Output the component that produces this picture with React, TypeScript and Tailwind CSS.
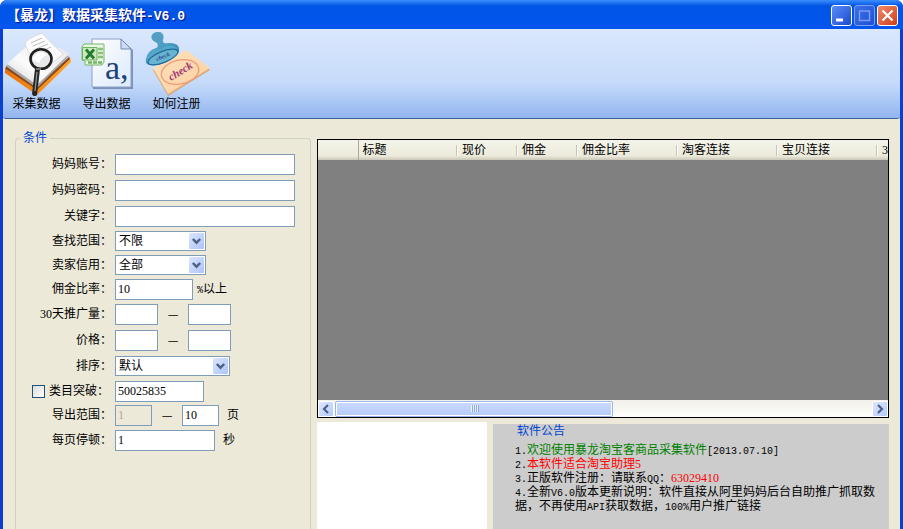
import type { ReactNode } from "react";

const FIELD =
  "h-[21px] border border-[#7f9db9] bg-white px-[2px] font-['Liberation_Serif','Noto_Sans_CJK_SC',serif] text-[12px] leading-none text-black outline-none disabled:bg-[#ece9d8] disabled:text-[#aca899]";

function Row({ id, label, compact, check, children }: { id: string; label: ReactNode; compact?: boolean; check?: ReactNode; children: ReactNode }) {
  return (
    <div className={`flex items-center ${compact ? "h-6" : "h-[26px]"}`}>
      <div className={`mr-[3px] flex w-24 items-center justify-end gap-1 ${check ? "pr-[3px]" : ""}`}>
        {check}
        <label htmlFor={id} className="whitespace-nowrap">{label}</label>
      </div>
      {children}
    </div>
  );
}

function Dash() {
  return <span className="w-[30px] text-center font-['Noto_Sans_CJK_SC',sans-serif]">—</span>;
}

function Dropdown({ id, options, wide }: { id: string; options: string[]; wide?: boolean }) {
  return (
    <div className={`relative ${wide ? "w-[115px]" : "w-[91px]"}`}>
      <select id={id} className="block h-5 w-full appearance-none border border-[#7f9db9] bg-white px-[3px] text-[12px] leading-[18px] outline-none">
        {options.map((o) => (
          <option key={o}>{o}</option>
        ))}
      </select>
      <svg className="pointer-events-none absolute top-[2px] right-[2px]" width="15" height="16" viewBox="0 0 15 16">
        <defs>
          <linearGradient id={`${id}-g`} x1="0" y1="0" x2="1" y2="1">
            <stop offset="0" stopColor="#dbe6fe" />
            <stop offset="1" stopColor="#adc4f8" />
          </linearGradient>
        </defs>
        <rect width="15" height="16" rx="1" fill={`url(#${id}-g)`} />
        <path d="M3.8 6 7.5 9.7 11.2 6" fill="none" stroke="#4d6185" strokeWidth="2.4" />
      </svg>
    </div>
  );
}

function CollectIcon() {
  return (
    <svg width="70" height="64" viewBox="3 32 70 64" aria-hidden="true">
      <defs>
        <linearGradient id="page" x1="0" y1="1" x2="1" y2="0">
          <stop offset="0" stopColor="#cfcfcf" />
          <stop offset="0.4" stopColor="#fbfbfb" />
          <stop offset="1" stopColor="#e6e6e6" />
        </linearGradient>
        <linearGradient id="cover" x1="0" y1="0" x2="1" y2="0">
          <stop offset="0" stopColor="#e8730a" />
          <stop offset="0.5" stopColor="#f58a12" />
          <stop offset="1" stopColor="#ffa528" />
        </linearGradient>
      </defs>
      <path d="M5 67 36 88 70 57 71 62 37 95 5 73Z" fill="url(#cover)" />
      <path d="M6 66 36 87 69 57 70 59 37 90 6 69Z" fill="#8a4a20" />
      <path d="M6 66 28 45 69 56 37 88Z" fill="#a8a8a8" />
      <path d="M7 64 29 44 60 48 69 54 37 85Z" fill="url(#page)" />
      <path d="M25 44Q26 39 42 33Q50 42 63 54L44 70Q30 58 25 44Z" fill="#fcfcfc" stroke="#d0d0d0" strokeWidth=".7" />
      <path d="m31 43 11-5M33 46l12-5M36 49l12-5M40 52l11-5" stroke="#bcbcbc" strokeWidth="1" />
      <path d="m35 69-3 25q2 4 5 1l3-26Z" fill="#262626" />
      <path d="m37 72-2 19" stroke="#9a9a9a" strokeWidth="1.2" />
      <ellipse cx="41" cy="59" rx="10.5" ry="9.800" fill="#e3e6e8" fillOpacity=".9" stroke="#202020" strokeWidth="2.600" />
      <path d="M33 60q1-8 9-8l6 3q-5 0-9 8Z" fill="#fff" />
      <path d="M36 69h5" stroke="#8c8c8c" strokeWidth="1.500" />
    </svg>
  );
}

function ExportIcon() {
  return (
    <svg width="70" height="64" viewBox="73 32 70 64" aria-hidden="true">
      <defs>
        <linearGradient id="sheet" x1="0" y1="0" x2="1" y2="1">
          <stop offset="0" stopColor="#fff" />
          <stop offset="1" stopColor="#dce9fb" />
        </linearGradient>
      </defs>
      <path d="M93 40H122L133 50V89H93Z" fill="#7b92b5" />
      <path d="M92 39H121L131 49V87H92Z" fill="url(#sheet)" stroke="#8aa2c8" />
      <path d="M121 39V49H131Z" fill="#cbdcf5" stroke="#7189b0" />
      <text x="105" y="79" fontFamily="'Liberation Serif', serif" fontSize="34" fill="#1d4479">a,</text>
      <path d="M84 44h20v18l-2 3H85V61l-3-1V47Z" fill="#e9f6e3" stroke="#7ab56b" />
      <path d="M98 49h5M98 53h5M98 57h5" stroke="#8cc27c" strokeWidth="2.500" />
      <path d="M88 62.500h14" stroke="#76b367" strokeWidth="2.500" strokeDasharray="4 1" />
      <path d="M82.500 47.500H97V60H82.500Z" fill="#cbe8c1" stroke="#6fb25f" />
      <path d="M86 49.500 94 58.500M94 49.500 86 58.500" stroke="#237b2b" strokeWidth="2.800" />
    </svg>
  );
}

function RegisterIcon() {
  return (
    <svg width="70" height="64" viewBox="143 32 70 64" aria-hidden="true">
      <defs>
        <linearGradient id="note" x1="0" y1="0" x2="1" y2="1">
          <stop offset="0" stopColor="#ffe2bd" />
          <stop offset="1" stopColor="#fbcf9f" />
        </linearGradient>
        <linearGradient id="stamp" x1="0" y1="0" x2="1" y2="1">
          <stop offset="0" stopColor="#5eb0d2" />
          <stop offset="1" stopColor="#3787b3" />
        </linearGradient>
      </defs>
      <path d="M153 70 186 52 210 70 168 96Z" fill="#dba976" />
      <path d="M153 68 186 50 210 68 168 94Z" fill="url(#note)" />
      <ellipse cx="180" cy="72" rx="19" ry="12" fill="none" stroke="#ee9a7c" strokeWidth="1.300" transform="rotate(-12 180 72)" />
      <text x="171" y="81" transform="rotate(-31 171 81)" fontFamily="'Liberation Serif', serif" fontSize="11" fontStyle="italic" fontWeight="bold" fill="#a03878">check</text>
      <path d="M146 59q1-8 10-11 3-1 1-5-7-3-5-8 3-4 8-3 5 2 3 8-1 4 6 3 9 0 10 5v4q-5 7-15 11-11 4-17 1-2-2-1-5Z" fill="url(#stamp)" />
      <ellipse cx="157" cy="37" rx="5.500" ry="4.500" fill="#539ec2" />
      <path d="M147 58q2-7 11-9 3 2 7-3 7-1 12 2-2 5-13 10-11 4-17 0Z" fill="#55a6c9" />
      <ellipse cx="163" cy="57" rx="16" ry="5.500" transform="rotate(-22 163 57)" fill="#67b5d2" stroke="#1f6c98" strokeWidth="1.200" />
      <text x="157" y="61" transform="rotate(-22 157 61)" fontFamily="'Liberation Serif', serif" fontSize="6" fontStyle="italic" fontWeight="bold" fill="#2b4b91">check</text>
    </svg>
  );
}

function ToolButton({ icon, label }: { icon: ReactNode; label: string }) {
  return (
    <button className="flex w-[70px] flex-col items-center">
      {icon}
      <span className="pt-px pr-[3px] text-[12px] leading-[14px]">{label}</span>
    </button>
  );
}

function CaptionButton({ label, tone, children }: { label: string; tone: string; children: ReactNode }) {
  return (
    <button aria-label={label} className={`flex size-[21px] items-center justify-center rounded-[3px] border ${tone}`}>
      <svg width="19" height="19" viewBox="0 0 19 19" fill="none" stroke="currentColor">
        {children}
      </svg>
    </button>
  );
}

function ScrollButton({ label, d }: { label: string; d: string }) {
  return (
    <button aria-label={label} className="flex h-4 w-[16px] shrink-0 items-center justify-center rounded-[2px] border border-white bg-linear-to-br from-[#dce6fe] to-[#b5cafa]">
      <svg width="10" height="10" viewBox="0 0 10 10" fill="none" stroke="#4d6185" strokeWidth="2.200">
        <path d={d} />
      </svg>
    </button>
  );
}

const COLUMNS = [
  { name: "标题", width: "w-[100px]" },
  { name: "现价", width: "w-[60px]" },
  { name: "佣金", width: "w-[60px]" },
  { name: "佣金比率", width: "w-[100px]" },
  { name: "淘客连接", width: "w-[100px]" },
  { name: "宝贝连接", width: "w-[100px]" },
  { name: "3", width: "w-[100px]" },
];

function ResultGrid() {
  return (
    <section className="flex h-[279px] shrink-0 flex-col border border-black bg-[#808080]">
      <div className="flex-1 overflow-hidden">
        <table className="w-[660px] table-fixed border-collapse">
          <thead>
            <tr className="h-5 bg-linear-to-b from-[#f5f4ea] via-[#ebeadb] via-80% to-[#cbc7b8]">
              <th className="w-10 border-r border-[#aca899] p-0" />
              {COLUMNS.map((c) => (
                <th key={c.name} className={`p-0 text-left leading-4 font-normal ${c.width}`}>
                  <div className="flex items-center justify-between">
                    <span className="pl-1">{c.name}</span>
                    <span className="h-[11px] w-[2px] border-r border-l border-r-white border-l-[#c7c5b2]" />
                  </div>
                </th>
              ))}
            </tr>
          </thead>
        </table>
      </div>
      <div className="flex h-[17px] items-center bg-linear-to-b from-[#f1f0e9] to-[#fefefb]">
        <ScrollButton label="向左滚动" d="M7 1 3 5l4 4" />
        <div className="flex flex-1 px-px">
          <div className="flex h-4 w-[278px] items-center justify-center gap-px rounded-[2px] border border-[#9ab5ee] bg-linear-to-b from-[#cbdafd] to-[#b5cbfb] ring-1 ring-white ring-inset">
            {[0, 1, 2, 3].map((n) => (
              <span key={n} className="h-[7px] w-px bg-[#eef4fe] shadow-[1px_0_0_#8fa8e6]" />
            ))}
          </div>
        </div>
        <ScrollButton label="向右滚动" d="m3 1 4 4-4 4" />
      </div>
    </section>
  );
}

function Mono({ children }: { children: ReactNode }) {
  return <span className="font-['Liberation_Mono',monospace] text-[10px] leading-none">{children}</span>;
}

function Notice() {
  return (
    <section className="mt-[2px] flex-1 bg-[#cccccc] pr-3 pl-[22px]">
      <h2 className="pl-[2px] leading-[14px] text-[#0046d5]">软件公告</h2>
      <div className="pt-[5px] leading-[14px]">
        <p><Mono>1.</Mono><span className="text-[#008000]">欢迎使用暴龙淘宝客商品采集软件</span><Mono>[2013.07.10]</Mono></p>
        <p><Mono>2.</Mono><span className="text-[#ff0000]">本软件适合淘宝助理5</span></p>
        <p><Mono>3.</Mono>正版软件注册：请联系<Mono>QQ</Mono>：<span className="text-[#ff0000]">63029410</span></p>
        <p><Mono>4.</Mono>全新<Mono>V6.0</Mono>版本更新说明：软件直接从阿里妈妈后台自助推广抓取数据，不再使用<Mono>API</Mono>获取数据，<Mono>100%</Mono>用户推广链接</p>
      </div>
    </section>
  );
}

export default function App() {
  return (
    <div className="flex h-screen flex-col overflow-hidden rounded-t-[7px] bg-[#0a3fd0] font-['Liberation_Serif','Noto_Sans_CJK_SC',sans-serif] text-[12px] text-black">
      <header className="flex h-[29px] shrink-0 items-center justify-between bg-linear-to-b from-[#3a8dfb] via-[#0055e5] via-20% to-[#0355ee] pr-[5px] pl-[6px]">
        <h1 className="pt-[3px] text-[14px] leading-5 font-bold whitespace-nowrap text-white [text-shadow:1px_1px_1px_#0f1089]">
          【暴龙】数据采集软件<span className="font-['Liberation_Mono',monospace] text-[13px]">-V6.0</span>
        </h1>
        <div className="flex gap-[2px] pt-[2px]">
          <CaptionButton label="最小化" tone="border-white bg-linear-to-br from-[#5c8cf5] to-[#1b48cf] text-white">
            <path d="M4 14h7" strokeWidth="3" />
          </CaptionButton>
          <CaptionButton label="最大化" tone="border-[#7fa0ee] bg-linear-to-br from-[#3b70ea] to-[#1c50d6] text-[#7c9cee]">
            <path d="M4.500 5v9.500h10V5M4 5h11" strokeWidth="1.500" />
          </CaptionButton>
          <CaptionButton label="关闭" tone="border-white bg-linear-to-br from-[#f08a68] to-[#cf3a10] text-white">
            <path d="m4.500 4.500 10 10m0-10-10 10" strokeWidth="2.200" />
          </CaptionButton>
        </div>
      </header>

      <div className="mx-[3px] flex min-h-0 flex-1 flex-col bg-[#ece9d8]">
        <nav className="flex h-[90px] shrink-0 items-start rounded-b-[3px] border-b border-[#3b619c] bg-linear-to-b from-[#dbe8fc] via-[#c5dbfa] via-60% to-[#93b5ee] pt-[3px]">
          <ToolButton icon={<CollectIcon />} label="采集数据" />
          <ToolButton icon={<ExportIcon />} label="导出数据" />
          <ToolButton icon={<RegisterIcon />} label="如何注册" />
        </nav>

        <main className="flex min-h-0 flex-1 pr-[11px] pl-3">
          <form className="flex w-[296px] shrink-0 pt-3">
            <fieldset className="w-full rounded-t-[4px] border border-b-0 border-[#d0d0bf]">
              <legend className="ml-1 px-[3px] leading-[14px] text-[#0046d5]">条件</legend>
              <div className="pt-[6px]">
                <Row id="account" label="妈妈账号："><input id="account" type="text" className={`${FIELD} w-[180px]`} /></Row>
                <Row id="password" label="妈妈密码："><input id="password" type="password" className={`${FIELD} w-[180px]`} /></Row>
                <Row id="keyword" label="关键字："><input id="keyword" type="text" className={`${FIELD} w-[180px]`} /></Row>
                <Row id="scope" label="查找范围：" compact><Dropdown id="scope" options={["不限"]} /></Row>
                <Row id="credit" label="卖家信用：" compact><Dropdown id="credit" options={["全部"]} /></Row>
                <Row id="rate" label="佣金比率：" compact>
                  <input id="rate" type="text" defaultValue="10" className={`${FIELD} w-[78px]`} />
                  <span className="ml-1"><Mono>%</Mono>以上</span>
                </Row>
                <Row id="volume" label="30天推广量：">
                  <input id="volume" type="text" className={`${FIELD} w-[43px]`} />
                  <Dash />
                  <input aria-label="30天推广量上限" type="text" className={`${FIELD} w-[43px]`} />
                </Row>
                <Row id="price" label="价格：">
                  <input id="price" type="text" className={`${FIELD} w-[43px]`} />
                  <Dash />
                  <input aria-label="价格上限" type="text" className={`${FIELD} w-[43px]`} />
                </Row>
                <Row id="sort" label="排序："><Dropdown id="sort" options={["默认"]} wide /></Row>
                <Row
                  id="category"
                  label="类目突破："
                  compact
                  check={<input type="checkbox" aria-label="启用类目突破" className="size-[13px] appearance-none border border-[#1c5180] bg-linear-to-br from-[#dcdcd7] to-white" />}
                >
                  <input id="category" type="text" defaultValue="50025835" className={`${FIELD} w-[89px]`} />
                </Row>
                <Row id="from" label="导出范围：" compact>
                  <input id="from" type="text" defaultValue="1" disabled className={`${FIELD} w-[37px]`} />
                  <Dash />
                  <input aria-label="导出范围结束页" type="text" defaultValue="10" className={`${FIELD} w-[37px]`} />
                  <span className="ml-2">页</span>
                </Row>
                <Row id="pause" label="每页停顿：">
                  <input id="pause" type="text" defaultValue="1" className={`${FIELD} w-[100px]`} />
                  <span className="ml-2">秒</span>
                </Row>
              </div>
            </fieldset>
          </form>

          <div className="flex min-w-0 flex-1 flex-col gap-1 pt-5 pl-[6px]">
            <ResultGrid />
            <div className="flex min-h-0 flex-1 items-stretch gap-[6px]">
              <div className="w-[170px] shrink-0 bg-white" />
              <Notice />
            </div>
          </div>
        </main>
      </div>
    </div>
  );
}
